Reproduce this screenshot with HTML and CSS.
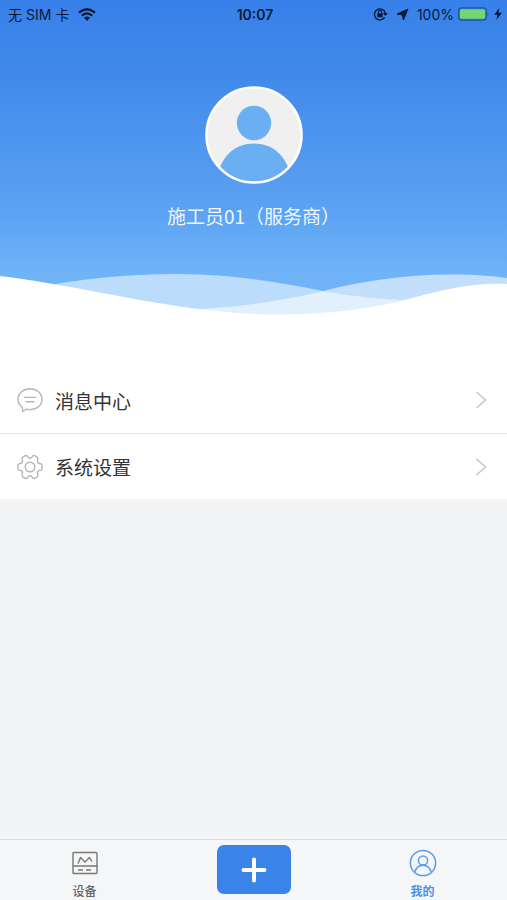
FILE: index.html
```html
<!DOCTYPE html>
<html lang="zh-CN">
<head>
<meta charset="utf-8">
<meta name="viewport" content="width=device-width, initial-scale=1">
<title>我的</title>
<link rel="stylesheet" href="styles.css">
</head>
<body>
<header class="hero">
  <div class="status">
    <div class="status-side">
      <span>无 SIM 卡</span>
      <svg class="wifi" width="18" height="13" viewBox="0 0 18 13" aria-hidden="true">
        <g fill="none" stroke="#061a38" stroke-width="2.3"><path d="M1 4.6Q9-2.2 17 4.6"/><path d="M3.8 7.6Q9 3.2 14.2 7.6"/></g>
        <path d="M6 9.8Q9 7.4 12 9.8L9 13Z" fill="#061a38"/>
      </svg>
    </div>
    <time class="clock">10:07</time>
    <div class="status-side status-right">
      <svg width="15" height="14" viewBox="0 0 15 14" aria-hidden="true">
        <path d="M11.6 10.4A5.5 5.5 0 1 1 12.3 6" fill="none" stroke="#061a38" stroke-width="1.4"/>
        <path d="M9.8 6h5L12.4 9Z" fill="#061a38"/>
        <rect x="4.3" y="6.2" width="5.4" height="4" rx=".6" fill="#061a38"/>
        <path d="M5.4 6.5V5a1.6 1.6 0 0 1 3.2 0v1.5" fill="none" stroke="#061a38" stroke-width="1.1"/>
      </svg>
      <svg class="locate" width="13" height="13" viewBox="0 0 13 13" aria-hidden="true"><path d="M12 1L7.400 12 6.400 7 1 6Z" fill="#061a38" stroke="#061a38" stroke-width="1" stroke-linejoin="round"/></svg>
      <span>100%</span>
      <svg width="32" height="14" viewBox="0 0 32 14" aria-hidden="true">
        <rect x=".7" y=".9" width="27.6" height="12.2" rx="3" fill="none" stroke="#1d559c" stroke-width="1.2"/>
        <rect x="2" y="2.2" width="25" height="9.6" rx="1.6" fill="#76d672"/>
        <path d="M29.6 5v4q1.8-2 0-4Z" fill="#1d559c"/>
      </svg>
      <svg width="8" height="12" viewBox="0 0 8 12" aria-hidden="true"><path d="M5.4 0L.2 6.8H3.4L2.4 12 7.8 4.8H4.5Z" fill="#061a38"/></svg>
    </div>
  </div>
  <svg class="avatar" viewBox="0 0 98 98" role="img" aria-label="头像">
    <defs><clipPath id="face"><circle cx="49" cy="49" r="47"/></clipPath></defs>
    <circle cx="49" cy="49" r="47.5" fill="#f0f0f0"/>
    <g fill="#6aaff1" clip-path="url(#face)"><circle cx="49" cy="37" r="17.2"/><path d="M12 92C16 69 31 57.500 49 57.500S82 69 86 92V98H12Z"/></g>
    <circle cx="49" cy="49" r="47.500" fill="none" stroke="#fff" stroke-width="2.600"/>
  </svg>
  <h1 class="name">施工员01（服务商）</h1>
  <svg class="waves" viewBox="0 0 507 60" preserveAspectRatio="none" aria-hidden="true">
    <path d="M40 27C90 17 140 14 178 14C230 14 280 22 323 31C350 36 375 39 420 41V60H40Z" fill="#fff" fill-opacity=".53"/>
    <path d="M180 50C230 48 280 42 323 31C370 19 410 15 450 14.500C475 14.500 492 16 507 18V60H180Z" fill="#fff" fill-opacity=".58"/>
    <path d="M0 16C65 24 120 38 190 48C220 52 250 54.500 275 54.500C325 54.500 370 49 405 40C440 30 475 22 507 24V60H0Z" fill="#fff"/>
  </svg>
</header>
<main>
  <nav class="menu" aria-label="个人菜单">
    <a class="row" href="#messages">
      <svg class="row-icon" viewBox="0 0 26 26" fill="none" stroke="#b5b5b5" stroke-width="1.400" stroke-linecap="round" stroke-linejoin="round" aria-hidden="true">
        <path d="M5.200 20.200C2.500 18.300 1 15.600 1 12.300C1 6.300 6.300 1.800 13 1.800S25 6.300 25 12.300 19.700 22.600 13 22.600C11.700 22.600 10.500 22.400 9.400 22.100L5.700 24.500Z"/>
        <path d="M7.500 10.400H18.500M9 14.800H17"/>
      </svg>
      <span class="row-label">消息中心</span>
      <svg class="arrow" viewBox="0 0 12 18" aria-hidden="true"><path d="M1.500 1L10.500 9 1.500 17"/></svg>
    </a>
    <a class="row" href="#settings">
      <svg class="row-icon" viewBox="0 0 26 26" fill="none" stroke="#b5b5b5" stroke-width="1.400" stroke-linejoin="round" aria-hidden="true">
        <path d="M8.200 1.700Q10 1 10.600 2.600Q11.300 4.300 13 4.300T15.400 2.600Q16 1 17.800 1.700L20.200 3.100Q21.500 4 20.800 5.500Q20 7.300 20.900 8.500Q21.800 9.800 23.400 9.600Q25 9.700 25 11.300V14.700Q25 16.300 23.400 16.400Q21.800 16.200 20.900 17.500Q20 18.700 20.800 20.500Q21.500 22 20.200 22.900L17.800 24.300Q16 25 15.400 23.400Q14.700 21.700 13 21.700T10.600 23.400Q10 25 8.200 24.300L5.800 22.900Q4.500 22 5.200 20.500Q6 18.700 5.100 17.500Q4.200 16.200 2.600 16.400Q1 16.300 1 14.700V11.300Q1 9.700 2.600 9.600Q4.200 9.800 5.100 8.500Q6 7.300 5.200 5.500Q4.500 4 5.800 3.100Z"/>
        <circle cx="13" cy="13" r="4.800"/>
      </svg>
      <span class="row-label">系统设置</span>
      <svg class="arrow" viewBox="0 0 12 18" aria-hidden="true"><path d="M1.500 1L10.500 9 1.500 17"/></svg>
    </a>
  </nav>
</main>
<footer class="tabs">
  <a class="tab" href="#devices">
    <svg class="tab-icon" viewBox="0 0 28 28" fill="none" stroke="#777" stroke-width="1.400" stroke-linejoin="round" aria-hidden="true">
      <rect x="2" y="3.500" width="24" height="21" rx="1"/><path d="M2 17H26M7 21H12M15 21H20M7 14.500L9.500 8.500 14 13 18.500 8.500 21 12.500"/>
    </svg>
    <span>设备</span>
  </a>
  <button class="add" type="button" aria-label="添加">
    <svg width="26" height="26" viewBox="0 0 26 26" aria-hidden="true"><path d="M13 2.500V23.500M2.500 13H23.500" stroke="#fff" stroke-width="4" stroke-linecap="round"/></svg>
  </button>
  <a class="tab active" href="#me" aria-current="page">
    <svg class="tab-icon" viewBox="0 0 28 28" fill="none" stroke="#5c9aea" stroke-width="1.500" aria-hidden="true">
      <circle cx="14" cy="14" r="12.600"/><circle cx="14" cy="11.500" r="4.600"/><path d="M5.800 23C7.200 18.700 10.200 16.300 14 16.300S20.800 18.700 22.200 23"/>
    </svg>
    <span>我的</span>
  </a>
</footer>
</body>
</html>
```

FILE: styles.css
```css
* {
  box-sizing: border-box;
}

body {
  margin: 0;
  min-height: 100vh;
  display: flex;
  flex-direction: column;
  background: #f2f4f6;
  color: #333;
  font-family: Inter, "Noto Sans CJK SC", sans-serif;
}

a {
  color: inherit;
  text-decoration: none;
}

svg {
  display: block;
  flex: none;
}

.hero {
  display: flex;
  flex-direction: column;
  align-items: center;
  background: linear-gradient(#3880e9, #418aeb 24%, #5ca3f3 67%, #70b4f7 86%);
}

.status {
  align-self: stretch;
  display: grid;
  grid-template-columns: 1fr auto 1fr;
  align-items: center;
  height: 28px;
  padding: 0 5px 0 8px;
  color: #061a38;
  font-size: 14px;
}

.status-side {
  display: flex;
  align-items: center;
  gap: 4px;
  white-space: nowrap;
}

.wifi {
  margin-left: 5px;
}

.status-right {
  justify-content: flex-end;
}

.locate {
  margin: 0 4px;
}

.clock {
  font-weight: 600;
}

.avatar {
  width: 98px;
  height: 98px;
  margin-top: 58px;
}

.name {
  margin: 16px 0 28px;
  color: #eef6ff;
  font-family: "Noto Sans CJK SC", sans-serif;
  font-size: 19px;
  font-weight: 400;
  line-height: 32px;
}

.waves {
  width: 100%;
  height: 60px;
}

main {
  flex: 1;
}

.menu {
  padding-top: 47px;
  background: #fff;
}

.row {
  display: flex;
  align-items: center;
  gap: 12px;
  height: 66px;
  padding: 0 20px 0 17px;
}

.row + .row {
  border-top: 1px solid #e8e8e8;
}

.row-icon {
  width: 26px;
  height: 26px;
}

.row-label {
  flex: 1;
  font-size: 19px;
}

.arrow {
  width: 12px;
  height: 18px;
  fill: none;
  stroke: #c4c4c4;
  stroke-width: 1.4px;
}

.tabs {
  display: grid;
  grid-template-columns: repeat(3, 1fr);
  justify-items: center;
  height: 61px;
  padding-top: 5px;
  background: #f5f6f8;
  border-top: 1px solid #dadcde;
}

.tab {
  display: flex;
  flex-direction: column;
  align-items: center;
  gap: 6px;
  padding-top: 4px;
  color: #666;
  font-size: 12px;
  font-weight: 500;
  line-height: 18px;
}

.tab.active {
  color: #4b8fe8;
  font-weight: 700;
}

.tab-icon {
  width: 28px;
  height: 28px;
}

.add {
  display: grid;
  place-items: center;
  width: 74px;
  height: 49px;
  padding: 0;
  border: 0;
  border-radius: 7px;
  background: #3a83e9;
}
```
